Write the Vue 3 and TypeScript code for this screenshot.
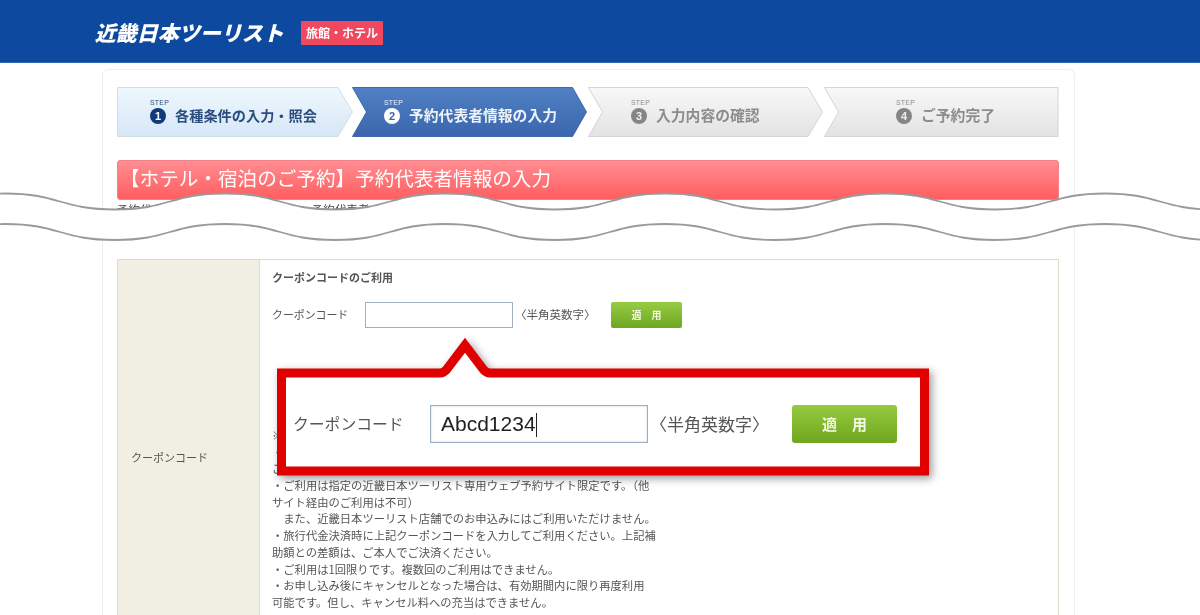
<script setup lang="ts">
interface Step {
  no: number
  label: string
  kind: string
  pad: number
  points: string
}
const h = 49.5
const steps: Step[] = [
  { no: 1, label: '各種条件の入力・照会', kind: 'done', pad: 33, points: `0.5,0.5 221,0.5 235.5,25 221,${h} 0.5,${h}` },
  { no: 2, label: '予約代表者情報の入力', kind: 'now', pad: 32, points: `0.5,0.5 220.5,0.5 234.5,25 220.5,${h} 0.5,${h} 14.5,25` },
  { no: 3, label: '入力内容の確認', kind: 'todo', pad: 43, points: `0.5,0.5 220,0.5 234.5,25 220,${h} 0.5,${h} 14.5,25` },
  { no: 4, label: 'ご予約完了', kind: 'todo', pad: 72, points: `0.5,0.5 234,0.5 234,${h} 0.5,${h} 14.5,25` },
]
function wave(y: number): string {
  let d = `M-105 ${y + 16}`
  for (let x = -105; x < 1300; x += 220) {
    d += ` C${x + 55} ${y + 16} ${x + 55} ${y} ${x + 110} ${y} C${x + 165} ${y} ${x + 165} ${y + 16} ${x + 220} ${y + 16}`
  }
  return d
}
const topWave = wave(193.5)
const bottomWave = wave(224)
const band = `${topWave} L1335 600 L-105 600 Z`
const bandClip = `${bottomWave} L1335 0 L-105 0 Z`
const lines: string[] = [
  '※',
  '・',
  'ご',
  '・ご利用は指定の近畿日本ツーリスト専用ウェブ予約サイト限定です。（他',
  'サイト経由のご利用は不可）',
  '　また、近畿日本ツーリスト店舗でのお申込みにはご利用いただけません。',
  '・旅行代金決済時に上記クーポンコードを入力してご利用ください。上記補',
  '助額との差額は、ご本人でご決済ください。',
  '・ご利用は1回限りです。複数回のご利用はできません。',
  '・お申し込み後にキャンセルとなった場合は、有効期間内に限り再度利用',
  '可能です。但し、キャンセル料への充当はできません。',
]
</script>

<template>
  <div class="page">
    <header class="top">
      <span class="logo">近畿日本ツーリスト</span>
      <span class="badge">旅館・ホテル</span>
    </header>

    <main class="card">
      <ol class="steps">
        <li v-for="s in steps" :key="s.no" class="step" :class="s.kind" :style="{ paddingLeft: s.pad + 'px' }">
          <svg class="shape" width="236" height="50" viewBox="0 0 236 50" aria-hidden="true">
            <defs>
              <linearGradient :id="'g' + s.no" x1="0" y1="0" x2="0" y2="1">
                <stop offset="0" :stop-color="s.kind === 'done' ? '#eff7fd' : s.kind === 'now' ? '#5080c4' : '#f8f8f8'" />
                <stop offset="1" :stop-color="s.kind === 'done' ? '#d6e7f7' : s.kind === 'now' ? '#3a66ad' : '#e3e3e3'" />
              </linearGradient>
            </defs>
            <polygon
              :points="s.points"
              :fill="'url(#g' + s.no + ')'"
              :stroke="s.kind === 'done' ? '#d3dde5' : s.kind === 'now' ? '#3f69ab' : '#d4d4d4'"
            />
          </svg>
          <div class="step-body">
            <span class="step-word">STEP</span>
            <div class="step-line">
              <span class="num">{{ s.no }}</span>
              <span class="step-label">{{ s.label }}</span>
            </div>
          </div>
        </li>
      </ol>

      <h1 class="title">【ホテル・宿泊のご予約】予約代表者情報の入力</h1>
      <p class="intro">予約代表者情報を入力してください。予約代表者の方の情報をご入力ください。</p>

      <section class="table">
        <div class="side">クーポンコード</div>
        <div class="main">
          <h2 class="sub">クーポンコードのご利用</h2>
          <div class="row">
            <span class="row-label">クーポンコード</span>
            <span class="small-input"></span>
            <span class="row-note">〈半角英数字〉</span>
            <span class="small-btn">適　用</span>
          </div>
          <div class="notes">
            <div v-for="(l, i) in lines" :key="i" class="note">{{ l }}</div>
          </div>
        </div>
      </section>
    </main>

    <svg class="break" width="1200" height="615" viewBox="0 0 1200 615" aria-hidden="true">
      <defs>
        <clipPath id="bandClip"><path :d="bandClip" /></clipPath>
      </defs>
      <path :d="band" fill="#fff" clip-path="url(#bandClip)" />
      <path :d="topWave" fill="none" stroke="#9a9a9a" stroke-width="1.8" />
      <path :d="bottomWave" fill="none" stroke="#9a9a9a" stroke-width="1.8" />
    </svg>

    <aside class="callout">
      <svg class="callout-shape" width="652" height="140" viewBox="0 0 652 140" aria-hidden="true">
        <path
          d="M4.5 36 H163 Q167 36 170 32 L188 8.3 L206 32 Q209 36 213 36 H647.5 V134 H4.5 Z"
          fill="#fff"
          stroke="#e00000"
          stroke-width="9"
        />
      </svg>
      <div class="big-row">
        <span class="big-label">クーポンコード</span>
        <span class="big-input">Abcd1234<i class="caret"></i></span>
        <span class="big-note">〈半角英数字〉</span>
        <span class="big-btn">適　用</span>
      </div>
    </aside>
  </div>
</template>

<style>
html,
body {
  margin: 0;
  background: #fff;
}
</style>

<style scoped>
.page {
  position: relative;
  width: 1200px;
  height: 615px;
  overflow: hidden;
  background: #fff;
  font-family: "Noto Sans CJK JP", "Liberation Sans", sans-serif;
  filter: blur(0.55px);
}
.top {
  height: 63px;
  background: #0d499e;
  display: flex;
  align-items: center;
  padding-left: 97px;
  box-sizing: border-box;
  border-bottom: 1px solid #2f66b3;
}
.logo {
  width: 190px;
  color: #fff;
  font-size: 21px;
  line-height: 24px;
  font-weight: 900;
  white-space: nowrap;
  transform: skewX(-14deg);
  margin-top: 1px;
}
.badge {
  margin-left: 14px;
  width: 82px;
  height: 24px;
  margin-top: 4px;
  background: #f0485f;
  color: #fff;
  font-size: 12px;
  font-weight: 700;
  line-height: 24px;
  text-align: center;
  border-radius: 1px;
  white-space: nowrap;
}
.card {
  width: 973px;
  box-sizing: border-box;
  margin: 6px 0 0 102px;
  padding: 17px 15px 0 14px;
  border: 1px solid #eeeeee;
  border-radius: 6px;
  height: 600px;
}
.steps {
  list-style: none;
  margin: 0 0 23px;
  padding: 0;
  display: grid;
  grid-template-columns: 235px 236px 236px 235px;
  height: 50px;
}
.step {
  position: relative;
  box-sizing: border-box;
  height: 50px;
}
.shape {
  position: absolute;
  left: 0;
  top: 0;
}
.step-body {
  position: relative;
  padding-top: 12px;
}
.step-word {
  display: block;
  font-size: 7px;
  line-height: 8px;
  letter-spacing: 0.2px;
  font-family: "Liberation Sans", sans-serif;
}
.step-line {
  display: flex;
  align-items: center;
  gap: 9px;
  margin-top: 0;
}
.num {
  width: 16px;
  height: 16px;
  border-radius: 50%;
  font-family: "Liberation Sans", sans-serif;
  font-size: 11px;
  font-weight: 700;
  line-height: 16px;
  text-align: center;
  flex: none;
}
.step-label {
  font-size: 14.8px;
  line-height: 20px;
  font-weight: 700;
  white-space: nowrap;
  margin-top: -2px;
}
.done {
  color: #2a4d7e;
}
.done .step-label {
  font-size: 14.2px;
}
.done .num {
  background: #0f3c78;
  color: #fff;
}
.now {
  color: #eef3fa;
}
.now .num {
  background: #fff;
  color: #3a66ad;
}
.todo {
  color: #8c8c8c;
}
.todo .num {
  background: #858585;
  color: #eee;
}
.title {
  margin: 0;
  height: 40px;
  box-sizing: border-box;
  border: 1px solid #f48088;
  border-radius: 3px;
  background: linear-gradient(#ff8d92, #ff5e60);
  color: #fff;
  font-size: 19.6px;
  font-weight: 400;
  line-height: 33px;
  padding-left: 2px;
  white-space: nowrap;
}
.intro {
  margin: 0;
  height: 59px;
  box-sizing: border-box;
  padding-top: 1px;
  font-size: 11.5px;
  line-height: 16px;
  color: #444;
  white-space: nowrap;
}
.table {
  display: grid;
  grid-template-columns: 142px 1fr;
  border: 1px solid #dfdccb;
  height: 500px;
}
.side {
  background: #f1efe3;
  border-right: 1px solid #dfdccb;
  padding: 189px 0 0 13px;
  font-size: 11px;
  line-height: 16px;
  color: #555;
}
.main {
  padding: 9px 0 0 12px;
  color: #555;
}
.sub {
  margin: 0 0 17px;
  font-size: 11px;
  line-height: 16px;
  font-weight: 700;
  color: #555;
}
.row {
  display: flex;
  align-items: center;
  height: 26px;
}
.row-label {
  width: 93px;
  font-size: 10.9px;
  white-space: nowrap;
  margin-top: -2px;
}
.small-input {
  width: 148px;
  height: 26px;
  box-sizing: border-box;
  border: 1px solid #9db0c2;
  background: #fff;
}
.row-note {
  width: 98px;
  padding-left: 2px;
  box-sizing: border-box;
  font-size: 11.5px;
  white-space: nowrap;
  margin-top: -2px;
}
.small-btn {
  width: 71px;
  height: 26px;
  border-radius: 2px;
  background: linear-gradient(#98cc45, #6ea61f);
  color: #eef6dc;
  font-size: 10px;
  font-weight: 700;
  line-height: 26px;
  text-align: center;
  white-space: pre;
}
.notes {
  margin-top: 99px;
}
.note {
  font-size: 11.3px;
  line-height: 16.7px;
  height: 16.7px;
  white-space: pre;
  color: #555;
}
.break {
  position: absolute;
  left: 0;
  top: 0;
  pointer-events: none;
}
.callout {
  position: absolute;
  left: 277px;
  top: 337px;
  width: 652px;
  height: 140px;
}
.callout-shape {
  position: absolute;
  left: 0;
  top: 0;
  overflow: visible;
  filter: drop-shadow(3px 3px 4px rgba(0, 0, 0, 0.4));
}
.big-row {
  position: relative;
  display: flex;
  align-items: center;
  padding: 68px 0 0 16px;
  height: 38px;
}
.big-label {
  width: 137px;
  font-size: 15.8px;
  color: #555;
  white-space: nowrap;
  margin-top: -2px;
}
.big-input {
  width: 218px;
  height: 38px;
  box-sizing: border-box;
  border: 1px solid #9cafc0;
  box-shadow: inset 0 0 2px rgba(120, 150, 175, 0.5);
  padding-left: 10px;
  font-family: "Liberation Sans", sans-serif;
  font-size: 21px;
  line-height: 36px;
  color: #222;
  background: #fff;
  white-space: nowrap;
}
.caret {
  display: inline-block;
  width: 1px;
  height: 24px;
  background: #222;
  vertical-align: -6px;
}
.big-note {
  width: 144px;
  padding-left: 2px;
  box-sizing: border-box;
  font-size: 17px;
  color: #555;
  white-space: nowrap;
  margin-top: -2px;
}
.big-btn {
  width: 105px;
  height: 38px;
  border-radius: 3px;
  background: linear-gradient(#96cb40, #6ea61f);
  color: #f1f8e2;
  font-size: 15px;
  font-weight: 700;
  line-height: 38px;
  text-align: center;
  white-space: pre;
}
</style>
